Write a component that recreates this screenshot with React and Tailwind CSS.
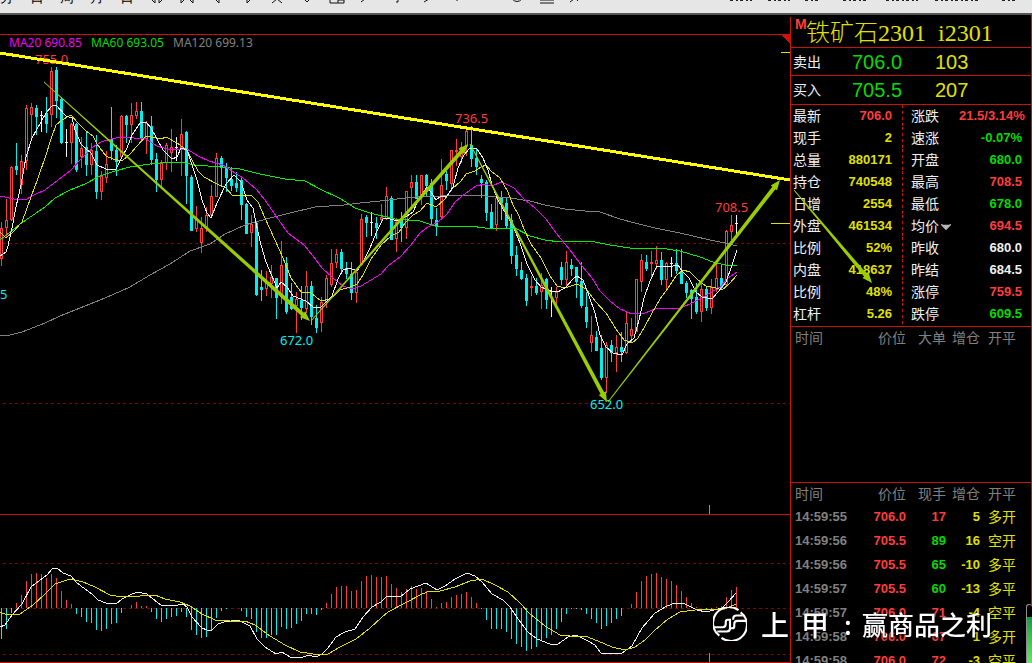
import { ChevronDown } from 'lucide-react';

const STEP = 5;

// one candle per bar: kind (r = up, c = down, w = doji), high, body top, body bottom, low
const candles = [
  ['r', 222, 228, 259, 266], ['r', 199, 220, 228, 237], ['r', 166, 167, 220, 221], ['c', 143, 166, 170, 175],
  ['r', 155, 161, 185, 194], ['r', 105, 108, 161, 170], ['r', 103, 107, 115, 140], ['c', 105, 108, 117, 135],
  ['w', 111, 115, 116, 132], ['c', 97, 113, 124, 133], ['r', 67, 71, 115, 127], ['c', 67, 70, 101, 118],
  ['c', 97, 99, 143, 144], ['w', 129, 142, 143, 157], ['r', 123, 124, 143, 164], ['c', 123, 124, 170, 172],
  ['r', 137, 148, 157, 168], ['c', 131, 147, 165, 176], ['r', 143, 150, 165, 175], ['c', 135, 151, 192, 199],
  ['r', 171, 176, 192, 200], ['r', 151, 164, 178, 183], ['c', 107, 139, 151, 160], ['c', 145, 150, 162, 176],
  ['r', 115, 116, 157, 158], ['c', 115, 116, 125, 143], ['r', 103, 115, 125, 143], ['r', 102, 111, 116, 119],
  ['c', 102, 111, 139, 140], ['r', 121, 123, 139, 154], ['c', 116, 126, 160, 165], ['c', 153, 159, 180, 192],
  ['r', 160, 163, 180, 189], ['r', 143, 145, 163, 170], ['r', 129, 147, 153, 172], ['w', 137, 147, 148, 161],
  ['r', 119, 134, 148, 176], ['c', 131, 132, 176, 204], ['c', 175, 177, 231, 231], ['r', 206, 218, 229, 232],
  ['r', 217, 228, 243, 253], ['r', 207, 215, 229, 232], ['r', 185, 196, 215, 215], ['r', 153, 158, 197, 197],
  ['c', 156, 158, 167, 186], ['c', 163, 167, 178, 192], ['c', 167, 179, 186, 191], ['c', 172, 183, 188, 192],
  ['c', 178, 180, 205, 220], ['c', 203, 204, 234, 234], ['r', 215, 224, 233, 247], ['c', 222, 223, 295, 296],
  ['c', 270, 287, 290, 301], ['r', 271, 283, 289, 296], ['r', 265, 277, 284, 298], ['c', 278, 278, 298, 319],
  ['r', 241, 265, 297, 304], ['c', 257, 263, 312, 314], ['c', 283, 297, 309, 310], ['r', 292, 299, 306, 333],
  ['c', 286, 300, 308, 320], ['r', 271, 286, 309, 313], ['c', 281, 286, 317, 325], ['c', 305, 318, 328, 333],
  ['r', 297, 302, 323, 332], ['r', 275, 278, 303, 308], ['r', 249, 263, 285, 287], ['r', 249, 254, 263, 268],
  ['c', 249, 252, 269, 273], ['c', 262, 268, 274, 279], ['c', 262, 274, 293, 300], ['r', 270, 272, 293, 303],
  ['r', 214, 219, 265, 266], ['c', 215, 217, 223, 237], ['w', 212, 222, 223, 236], ['c', 217, 223, 228, 239],
  ['r', 204, 217, 220, 223], ['r', 187, 196, 219, 220], ['c', 196, 198, 240, 240], ['r', 218, 222, 239, 252],
  ['c', 212, 220, 228, 242], ['r', 191, 191, 228, 239], ['r', 175, 182, 188, 207], ['c', 175, 182, 199, 199],
  ['r', 175, 175, 197, 205], ['c', 174, 175, 186, 197], ['c', 179, 183, 219, 224], ['c', 208, 220, 226, 236],
  ['r', 159, 185, 217, 219], ['c', 171, 174, 181, 190], ['r', 150, 150, 184, 190], ['r', 139, 150, 152, 166],
  ['r', 142, 147, 157, 163], ['r', 128, 131, 147, 156], ['c', 126, 145, 159, 167], ['c', 148, 158, 167, 175],
  ['c', 175, 179, 183, 198], ['c', 180, 182, 213, 221], ['c', 204, 212, 228, 228], ['r', 197, 198, 225, 231],
  ['c', 191, 198, 203, 220], ['c', 197, 203, 226, 229], ['c', 214, 220, 256, 264], ['c', 246, 255, 269, 276],
  ['c', 262, 270, 279, 280], ['c', 274, 278, 301, 306], ['r', 276, 286, 288, 296], ['c', 278, 286, 293, 295],
  ['r', 273, 285, 292, 309], ['c', 278, 279, 300, 309], ['w', 287, 291, 292, 317], ['r', 287, 292, 298, 305],
  ['c', 262, 267, 280, 285], ['r', 251, 262, 280, 287], ['c', 259, 265, 269, 276], ['c', 267, 267, 282, 298],
  ['c', 262, 281, 306, 308], ['c', 292, 307, 322, 328], ['r', 316, 335, 343, 352], ['c', 331, 337, 351, 351],
  ['c', 335, 348, 378, 380], ['r', 342, 345, 378, 393], ['c', 340, 345, 353, 362], ['r', 335, 347, 353, 372],
  ['c', 332, 347, 352, 362], ['r', 312, 323, 353, 354], ['r', 318, 329, 336, 342], ['r', 279, 279, 332, 332],
  ['r', 254, 260, 282, 292], ['c', 255, 262, 269, 271], ['r', 251, 262, 264, 279], ['r', 246, 260, 264, 269],
  ['c', 252, 260, 280, 285], ['r', 262, 263, 280, 290], ['w', 257, 263, 264, 277], ['c', 249, 263, 271, 274],
  ['c', 249, 271, 284, 284], ['c', 281, 283, 293, 298], ['c', 289, 290, 299, 319], ['c', 283, 297, 312, 314],
  ['r', 281, 289, 312, 322], ['c', 287, 289, 308, 311], ['r', 279, 287, 308, 314], ['r', 262, 278, 290, 292],
  ['c', 264, 278, 288, 290], ['r', 230, 231, 285, 287], ['r', 215, 225, 232, 240], ['w', 215, 223, 224, 235],
];

// end of each MACD bar; ZERO means no bar
const ZERO = 608;
const macd = [
  639, 629, 613, 603, 595, 581, 574, 573, 574, 578, 574, 578, 591, 600, 604, 614, 617, 622, 623, 630,
  631, 629, 624, 623, 613, 608, 605, 602, 606, 606, 612, 619, 622, 619, 617, 616, 612, 617, 630, 635,
  638, 637, 630, 618, 611, 609, 608, 608, 611, 617, 619, 632, 638, 638, 635, 635, 627, 629, 628, 624,
  621, 614, 614, 615, 610, 603, 594, 587, 586, 586, 591, 590, 581, 576, 575, 577, 577, 576, 584, 588,
  592, 589, 586, 589, 588, 591, 599, 607, 603, 602, 597, 595, 594, 592, 597, 603, 609, 620, 629, 629,
  629, 632, 639, 644, 647, 651, 649, 647, 641, 638, 635, 629, 622, 614, 609, 609, 610, 614, 619, 623,
  629, 626, 623, 619, 616, 608, 604, 592, 581, 576, 574, 573, 577, 579, 581, 585, 591, 597, 603, 607,
  608, 610, 609, 607, 606, 597, 590, 587,
];

const lines = [
  {
    name: 'MA120',
    color: '#808080',
    points: '0,335 10,335 22,332 45,323 60,316 80,308 105,298 130,287 150,275 170,264 190,251 210,244 225,234 245,225 270,218 290,213 315,207 344,205 360,203 380,201 415,197 440,196 465,195 485,196 510,198 530,201 545,205 565,209 585,211 600,212 620,219 635,223 655,228 680,233 710,240 725,243 737,246',
  },
  {
    name: 'MA60',
    color: '#00f000',
    points: '0,240 20,224 45,207 55,198 70,190 85,184 100,176 115,171 130,167 150,164 170,162 185,163 195,165 220,167 240,169 260,174 285,179 305,181 320,189 341,199 355,208 370,213 395,219 420,221 435,226 445,227 470,226 485,228 515,228 530,236 545,240 560,242 590,241 610,245 630,248 640,249 660,248 680,251 700,257 713,262 725,265 737,265',
  },
  {
    name: 'MA20',
    color: '#f000f0',
    points: '0,196 14,199 25,200 34,195 45,190 58,180 71,170 81,159 93,147 101,142 111,139 121,137 146,139 157,146 171,150 187,149 198,156 209,161 223,165 232,171 243,178 256,189 265,200 276,216 288,233 304,245 313,256 322,268 333,278 343,286 352,289 361,286 371,280 381,274 388,266 401,256 411,245 420,233 428,227 438,222 447,214 455,202 466,193 476,186 485,184 491,186 502,182 514,188 524,199 535,208 546,219 556,233 570,250 582,266 592,278 600,291 610,301 620,309 632,314 645,313 655,309 680,308 690,304 700,299 710,293 720,287 728,278 737,272',
  },
  {
    name: 'MA10',
    color: '#e0e000',
    points: '0,232 6,238 13,232 22,222 31,197 38,178 46,155 51,139 56,125 62,120 71,115 77,122 86,131 93,136 97,144 106,156 113,159 122,161 131,153 137,146 146,136 151,137 161,139 166,137 177,143 187,150 192,160 198,171 204,177 217,184 226,188 232,195 238,196 251,195 258,202 265,218 275,240 283,258 291,278 301,292 311,293 321,301 330,299 340,290 350,287 357,284 363,275 371,259 381,245 391,236 399,232 405,223 413,215 420,211 427,203 436,207 445,199 452,189 461,181 466,174 475,171 481,167 486,165 491,171 500,178 508,192 513,205 519,216 524,229 531,244 541,258 550,276 557,286 565,288 577,284 586,289 596,302 606,313 616,329 624,340 632,343 638,338 645,326 652,313 660,299 668,288 676,276 683,270 690,272 698,280 706,286 716,288 722,290 729,284 737,275',
  },
  {
    name: 'MA5',
    color: '#f0f0f0',
    points: '0,256 6,252 8,246 12,228 16,207 21,185 26,157 32,138 41,122 46,113 52,106 56,105 66,116 72,118 75,130 81,144 86,149 91,153 97,165 106,169 116,169 122,157 127,148 132,135 140,123 146,122 151,128 157,139 163,150 172,159 177,157 181,148 187,150 192,165 197,180 202,200 207,213 211,218 217,203 226,184 234,175 241,182 247,200 253,208 256,223 261,245 266,262 277,288 281,282 287,287 293,296 306,301 313,307 321,307 332,296 338,279 343,270 350,268 357,271 364,260 370,248 377,231 383,219 387,218 397,221 407,216 413,212 418,201 423,193 427,187 431,192 436,200 441,196 447,196 453,187 458,168 464,155 470,148 477,149 483,158 488,170 492,185 498,200 506,214 514,228 520,243 527,264 535,280 541,287 551,291 558,292 566,287 573,279 577,276 583,280 589,296 595,313 600,335 606,347 613,353 622,355 627,344 634,338 639,320 644,298 650,281 657,266 668,267 678,265 682,271 689,278 696,292 702,297 712,299 718,292 726,282 732,265 737,250',
  },
  {
    name: 'DIF',
    color: '#f0f0f0',
    points: '0,627 5,625 12,615 22,604 31,587 40,580 47,575 52,569 57,568 63,573 71,576 77,583 85,589 92,594 98,600 106,603 116,604 122,599 130,595 137,592 147,594 153,599 161,605 178,605 183,604 187,607 192,617 202,628 207,630 212,630 218,624 224,622 238,620 250,626 257,639 265,647 276,654 282,652 290,657 301,658 308,655 316,657 322,654 328,648 336,637 345,632 355,629 363,617 372,607 381,602 387,596 400,597 410,589 426,583 437,590 445,586 455,579 467,573 475,576 482,582 492,594 503,600 510,607 518,619 528,632 537,639 550,644 558,644 568,637 576,635 588,641 595,645 601,653 612,654 622,653 632,646 642,628 655,613 667,606 675,603 685,604 697,610 706,612 722,608 728,602 736,593',
  },
  {
    name: 'DEA',
    color: '#e0e000',
    points: '0,612 7,615 20,614 33,605 45,594 55,584 70,579 83,582 95,587 110,595 122,597 140,596 155,595 165,599 180,602 190,606 202,614 215,620 230,621 245,621 255,625 270,636 285,645 300,652 320,655 328,654 340,647 356,639 370,628 381,618 388,612 405,603 422,594 430,591 440,591 455,587 470,581 482,579 495,585 508,592 520,603 530,614 545,626 560,635 570,636 585,636 598,641 612,647 625,650 635,647 645,640 655,630 668,619 680,612 695,610 725,609 736,604',
  },
];

const labels = [
  { text: '755.0', x: 35, y: 64, color: '#ff3c3c' },
  { text: '736.5', x: 455, y: 123, color: '#ff3c3c' },
  { text: '708.5', x: 715, y: 212, color: '#ff3c3c' },
  { text: '672.0', x: 280, y: 345, color: '#00f0f0' },
  { text: '652.0', x: 590, y: 409, color: '#00f0f0' },
  { text: '5', x: 0, y: 299, color: '#00f0f0' },
];

const quotes = [
  ['最新', '706.0', 'text-[#ff3c3c]', '涨跌', '21.5/3.14%', 'text-[#ff3c3c]'],
  ['现手', '2', 'text-[#e0e000]', '速涨', '-0.07%', 'text-[#00dc00]'],
  ['总量', '880171', 'text-[#e0e000]', '开盘', '680.0', 'text-[#00dc00]'],
  ['持仓', '740548', 'text-[#e0e000]', '最高', '708.5', 'text-[#ff3c3c]'],
  ['日增', '2554', 'text-[#e0e000]', '最低', '678.0', 'text-[#00dc00]'],
  ['外盘', '461534', 'text-[#e0e000]', '均价', '694.5', 'text-[#ff3c3c]'],
  ['比例', '52%', 'text-[#e0e000]', '昨收', '680.0', 'text-[#f0f0f0]'],
  ['内盘', '418637', 'text-[#e0e000]', '昨结', '684.5', 'text-[#f0f0f0]'],
  ['比例', '48%', 'text-[#e0e000]', '涨停', '759.5', 'text-[#ff3c3c]'],
  ['杠杆', '5.26', 'text-[#e0e000]', '跌停', '609.5', 'text-[#00dc00]'],
];

const ticks = [
  ['14:59:55', '706.0', '17', 'text-[#ff3c3c]', '5', '多开'],
  ['14:59:56', '705.5', '89', 'text-[#00dc00]', '16', '空开'],
  ['14:59:56', '705.5', '65', 'text-[#00dc00]', '-10', '多平'],
  ['14:59:57', '705.5', '60', 'text-[#00dc00]', '-13', '多平'],
  ['14:59:57', '706.0', '71', 'text-[#ff3c3c]', '-4', '空平'],
  ['14:59:58', '706.0', '67', 'text-[#ff3c3c]', '1', '多开'],
  ['14:59:58', '706.0', '72', 'text-[#ff3c3c]', '-3', '空平'],
];

const periods = ['分', '日', '周', '月', '日'];

const tools = [
  { name: 'Resize width', d: 'M2 0L6 4V0M10 0V4L14 0' },
  { name: 'Fit range', d: 'M2 0V4L6 0M10 0L14 4V0' },
  { name: 'Previous', d: 'M6 0L10 4V0' },
  { name: 'Next', d: 'M8 0V4L12 0' },
  { name: 'Remove', d: 'M3 4L8 0L13 4' },
  { name: 'Collapse', d: 'M5 0L8 3L11 0' },
  { name: 'Layout', d: 'M1 0V4H15V0M9 0V4M9 1H15' },
  { name: 'Line', d: 'M2 3L6 0' },
  { name: 'Measure', d: 'M9 0V3H7' },
  { name: 'Ray', d: 'M5 3L10 0' },
  { name: 'Vertical line', d: 'M8 0V2' },
  { name: 'Point', d: 'M7 0H10' },
  { name: 'Circle', d: 'M3 0Q8 5 13 0' },
  { name: 'Parallel lines', d: 'M1 1H15M1 4H15' },
  { name: 'Wave', d: 'M1 3L5 0M7 0L9 2' },
];

// arrow that grows from a hairline at its tail to a solid head
function taper(x1, y1, x2, y2, width) {
  const len = Math.hypot(x2 - x1, y2 - y1);
  const ux = (x2 - x1) / len;
  const uy = (y2 - y1) / len;
  const at = (along, side) => `${x1 + ux * along - uy * side},${y1 + uy * along + ux * side}`;
  const neck = len - 10;
  return [
    at(0, -0.5), at(neck, -width / 2), at(neck, -width), at(len, 0), at(neck, width), at(neck, width / 2), at(0, 0.5),
  ].join(' ');
}

function Toolbar() {
  return (
    <header className="flex h-[15px] shrink-0 items-start justify-between overflow-hidden border-b-2 border-[#555] bg-[#e6e6e6] text-black">
      <div className="-ml-2 flex h-1 items-end overflow-hidden">
        {periods.map((p, i) => (
          <button key={i} className="w-[30px] shrink-0 text-center text-sm leading-[14px]">{p}</button>
        ))}
        {tools.map(t => (
          <button key={t.name} aria-label={t.name} className="flex w-[30px] shrink-0 justify-center">
            <svg viewBox="0 0 16 5" className="h-[5px] w-4" fill="none" stroke="#111">
              <path d={t.d} />
            </svg>
          </button>
        ))}
      </div>
      <svg viewBox="0 0 302 1" className="h-px w-[302px] shrink-0" stroke="#222">
        <path d="M0 0.5H22M38 0.5H60M75 0.5H88M113 0.5H136M156 0.5H188M205 0.5H250M272 0.5H288" strokeDasharray="3 3 2 2" />
      </svg>
    </header>
  );
}

function Candle({ bar, x }) {
  const [kind, high, top, bottom, low] = bar;
  if (kind === 'c') {
    return (
      <g fill="#00f0f0">
        <rect x={x} y={high} width="1" height={Math.max(low - high, 1)} />
        <rect x={x - 1} y={top} width="3" height={Math.max(bottom - top, 1)} />
      </g>
    );
  }
  if (kind === 'w') {
    return (
      <g fill="#f0f0f0">
        <rect x={x} y={high} width="1" height={low - high} />
        <rect x={x - 1} y={top} width="3" height="1" />
      </g>
    );
  }
  return (
    <g fill="#ff3c3c">
      <rect x={x} y={high} width="1" height={low - high} />
      <rect x={x - 1} y={top} width="3" height={bottom - top} />
      <rect x={x} y={top + 1} width="1" height={Math.max(bottom - top - 2, 0)} fill="#000" />
    </g>
  );
}

function Chart() {
  return (
    <svg viewBox="0 15 791 648" preserveAspectRatio="xMinYMin meet" className="h-full w-full font-['Noto_Sans',sans-serif]">
      {/* Frame and grid */}
      <g shapeRendering="crispEdges">
        <g fill="#c81408">
          <rect x="0" y="34" width="790" height="1" />
          <rect x="0" y="514" width="790" height="1" />
          <rect x="0" y="662" width="790" height="1" />
          <rect x="790" y="17" width="1" height="646" />
        </g>
        <path d="M781 35H790V44Z" fill="#c81408" />
        {[243, 403, 563, 608, 654].map(y => (
          <line key={y} x1="3" x2="790" y1={y + 0.5} y2={y + 0.5} stroke="#8c0000" strokeDasharray="3 3" />
        ))}
        <rect x="781" y="52" width="9" height="1" fill="#e0e000" />
        <rect x="771" y="223" width="19" height="1" fill="#e0e000" />
        <rect x="709" y="505" width="1" height="9" fill="#909090" />
        <rect x="709" y="653" width="1" height="9" fill="#909090" />
      </g>

      {/* MACD bars and candles */}
      <g shapeRendering="crispEdges">
        {macd.map((y, i) => (
          <rect
            key={i}
            x={1 + i * STEP}
            y={Math.min(y, ZERO)}
            width="1"
            height={Math.abs(y - ZERO)}
            fill={y < ZERO ? '#ff3c3c' : '#00f0f0'}
          />
        ))}
        {candles.map((bar, i) => <Candle key={i} bar={bar} x={1 + i * STEP} />)}
      </g>

      {lines.map(l => (
        <polyline key={l.name} points={l.points} fill="none" stroke={l.color} shapeRendering="crispEdges" />
      ))}

      <g fontSize="12">
        <text x="9" y="47" fill="#f000f0">MA20 690.85</text>
        <text x="91" y="47" fill="#00dc00">MA60 693.05</text>
        <text x="173" y="47" fill="#808080">MA120 699.13</text>
      </g>
      <g fontSize="13">
        {labels.map(l => (
          <text key={l.text} x={l.x} y={l.y} fill={l.color}>{l.text}</text>
        ))}
      </g>

      {/* Trend line and swing arrows */}
      <line x1="0" y1="53" x2="790" y2="180" stroke="#ff0" strokeWidth="3" shapeRendering="crispEdges" />
      <g fill="#9acd00">
        <polygon points={taper(44, 82, 310, 321, 4)} />
        <polygon points={taper(311, 321, 468, 144, 4)} />
        <polygon points={taper(470, 144, 607, 402, 4)} />
        <polygon points={taper(608, 402, 780, 180, 4)} />
      </g>
    </svg>
  );
}

function Depth({ label, price, volume, className }) {
  return (
    <div className={`flex items-center border-b border-[#c81408] pl-0.5 ${className}`}>
      <span className="w-[59px] text-sm">{label}</span>
      <span className="w-[83px] text-xl text-[#00dc00]">{price}</span>
      <span className="text-xl text-[#e0e000]">{volume}</span>
    </div>
  );
}

function Columns() {
  return (
    <colgroup>
      <col className="w-[65px]" />
      <col className="w-[50px]" />
      <col className="w-10" />
      <col className="w-[34px]" />
      <col />
    </colgroup>
  );
}

function TickHead({ names }) {
  return (
    <thead>
      <tr className="h-[22px] text-sm text-[#808080]">
        {names.map((n, i) => (
          <th
            key={n}
            scope="col"
            className={`p-0 font-normal whitespace-nowrap ${i === 0 ? 'pl-1 text-left' : i === 4 ? 'pl-2 text-left' : 'text-right'}`}
          >
            <span className={i > 0 && i < 4 ? 'float-right' : ''}>{n}</span>
          </th>
        ))}
      </tr>
    </thead>
  );
}

function QuotePanel() {
  return (
    <aside className="flex w-[241px] shrink-0 flex-col overflow-hidden border-r border-[#c81408] font-['Liberation_Sans','Noto_Sans_CJK_SC',sans-serif] text-[#f0f0f0]">
      <h1 className="flex h-[33px] shrink-0 items-center gap-3 border-b border-[#c81408] pt-1 pl-1 font-['Liberation_Serif','Noto_Sans_CJK_SC',serif] text-2xl font-light text-[#e0e000]">
        <span className="flex">
          <sup className="top-0 w-[11px] font-['Liberation_Sans',sans-serif] text-sm leading-none font-bold text-[#ff3c3c]">M</sup>
          <span className="leading-8">铁矿石2301</span>
        </span>
        <span className="leading-8">i2301</span>
      </h1>
      <Depth label="卖出" price="706.0" volume="103" className="h-7" />
      <Depth label="买入" price="705.5" volume="207" className="h-[29px]" />

      {/* Quote details */}
      <div className="flex shrink-0 pb-px">
        <table className="w-full table-fixed border-collapse">
          <colgroup>
            <col className="w-[43px]" />
            <col className="w-[69px]" />
            <col className="w-14" />
            <col />
          </colgroup>
          <tbody>
            {quotes.map(([l1, v1, c1, l2, v2, c2], i) => (
              <tr key={i} className="h-[22px] text-[13px] leading-5">
                <th scope="row" className="p-0 pl-0.5 text-left text-sm leading-5 font-normal">{l1}</th>
                <td className="bg-[repeating-linear-gradient(to_bottom,#c81408_0_3px,transparent_3px_6px)] bg-[length:1px_100%] bg-right bg-no-repeat p-0 pr-[11px] text-right font-bold">
                  <span className={c1}>{v1}</span>
                </td>
                <th scope="row" className="p-0 pl-2 text-left text-sm leading-5 font-normal whitespace-nowrap">
                  {l2}
                  {l2 === '均价' && (
                    <button aria-label="切换" className="ml-0.5 inline-block align-middle text-[#b4b4b4]">
                      <ChevronDown className="h-1.5 w-2.5 fill-current" viewBox="5 8 14 8" preserveAspectRatio="none" />
                    </button>
                  )}
                </th>
                <td className={`p-0 pr-[9px] text-right font-bold ${c2}`}>{v2}</td>
              </tr>
            ))}
          </tbody>
        </table>
      </div>

      {/* Large orders */}
      <div className="h-[156px] shrink-0 border-t border-[#c81408]">
        <table className="w-full table-fixed border-collapse">
          <Columns />
          <TickHead names={['时间', '价位', '大单', '增仓', '开平']} />
        </table>
      </div>

      {/* Ticks */}
      <div className="min-h-0 flex-1 overflow-hidden border-t border-[#c81408]">
        <table className="w-full table-fixed border-collapse">
          <Columns />
          <TickHead names={['时间', '价位', '现手', '增仓', '开平']} />
          <tbody>
            {ticks.map(([time, price, vol, volColor, oi, type], i) => (
              <tr key={i} className="h-6 text-[13px] leading-5 font-bold">
                <td className="p-0 pl-1 text-[#808080]">{time}</td>
                <td className="p-0 text-right text-[#ff3c3c]">{price}</td>
                <td className={`p-0 text-right ${volColor}`}>{vol}</td>
                <td className="p-0 text-right text-[#e0e000]">{oi}</td>
                <td className="p-0 pl-2 text-sm leading-5 font-normal text-[#e0e000]">{type}</td>
              </tr>
            ))}
          </tbody>
        </table>
      </div>
    </aside>
  );
}

function Watermark() {
  return (
    <div className="pointer-events-none absolute right-[40px] bottom-[22px] flex items-center text-white drop-shadow-[1px_1px_1px_rgba(0,0,0,0.8)]">
      <svg viewBox="0 0 32 32" className="mr-[14px] h-[34px] w-[34px]" fill="none" stroke="currentColor" strokeWidth="2">
        <path d="M6 27A15 15 0 0 1 24 3M26 5A15 15 0 0 1 8 29" />
        <path d="M1 19H9Q12 19 12 16V14Q12 12 14 12H16V20Q16 23 13 23H4" />
        <path d="M31 13H23Q20 13 20 16V18Q20 20 18 20H16M19 12V11Q19 8 22 8H28" />
      </svg>
      <span className="flex items-center font-['Noto_Sans_CJK_SC',sans-serif] text-[26px] leading-8 font-medium">
        <span className="w-10 text-[28px]">上</span>
        <span className="w-[43px] text-[28px]">甲</span>
        <span className="w-[18px]">:</span>
        <span>赢商品之利</span>
      </span>
    </div>
  );
}

export default function App() {
  return (
    <div className="relative flex h-screen flex-col overflow-hidden bg-black">
      <Toolbar />
      <main className="flex min-h-0 flex-1">
        <section className="min-w-0 flex-1">
          <Chart />
        </section>
        <QuotePanel />
      </main>

      {/* Arrow drawn across the quote panel */}
      <svg viewBox="0 0 90 100" className="pointer-events-none absolute top-[185px] right-[152px] h-[100px] w-[90px]">
        <polygon points={taper(4, 5, 82, 98, 4)} fill="#9acd00" />
      </svg>

      <Watermark />
      <div className="absolute right-0 bottom-0 h-[59px] w-1.5 rounded-t-md border border-r-0 border-[#909090] bg-black">
        <div className="mt-3 h-12 bg-gradient-to-b from-[#00a03c] to-[#6ee66e]" />
      </div>
    </div>
  );
}
